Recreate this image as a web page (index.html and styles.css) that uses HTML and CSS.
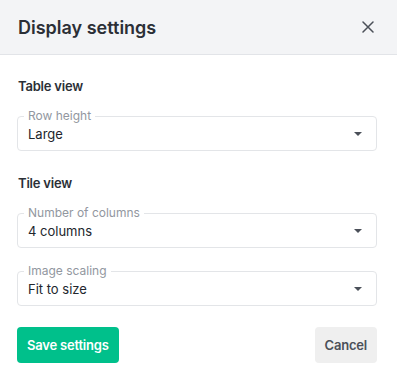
FILE: index.html
```html
<!DOCTYPE html>
<html lang="en">
<head>
    <meta charset="UTF-8">
    <meta name="viewport" content="width=device-width, initial-scale=1.0">
    <title>Display settings</title>
    <link rel="stylesheet" href="styles.css">
</head>
<body>

    <div class="dialog">
        <div class="dialog-header">
            <h2>Display settings</h2>
            <button class="close-btn" aria-label="Close">
                <svg width="12" height="12" viewBox="0 0 12 12">
                    <path d="M1 1 L11 11 M11 1 L1 11" stroke="#4b5059" stroke-width="1.5" stroke-linecap="round" fill="none"/>
                </svg>
            </button>
        </div>

        <div class="dialog-body">
            <h3>Table view</h3>

            <div class="field">
                <span class="field-label">Row height</span>
                <div class="field-value">Large</div>
                <span class="caret"></span>
            </div>

            <h3 class="section-gap">Tile view</h3>

            <div class="field">
                <span class="field-label">Number of columns</span>
                <div class="field-value">4 columns</div>
                <span class="caret"></span>
            </div>

            <div class="field field-gap">
                <span class="field-label">Image scaling</span>
                <div class="field-value">Fit to size</div>
                <span class="caret"></span>
            </div>

            <div class="actions">
                <button class="save-btn">Save settings</button>
                <button class="cancel-btn">Cancel</button>
            </div>
        </div>
    </div>

</body>
</html>
```

FILE: styles.css
```css
body {
    font-family: 'Inter', 'Noto Sans', sans-serif;
    background-color: #ffffff;
    margin: 0;
    padding: 0;
}

.dialog {
    width: 397px;
    height: 383px;
    background-color: #ffffff;
}

.dialog-header {
    display: flex;
    align-items: center;
    justify-content: space-between;
    height: 54px;
    padding: 0 23px 0 18px;
    background-color: #f3f4f6;
    border-bottom: 1px solid #e2e4e8;
}

h2 {
    margin: 0;
    font-size: 18px;
    font-weight: 600;
    color: #2b2f36;
}

.close-btn {
    display: flex;
    padding: 0;
    border: none;
    background: none;
    cursor: pointer;
}

.dialog-body {
    padding: 21px 20px 0 17px;
}

h3 {
    margin: 0 0 0 1px;
    font-size: 13px;
    line-height: 20px;
    font-weight: 600;
    letter-spacing: -0.2px;
    color: #2b2f36;
}

.section-gap {
    margin-top: 22px;
}

.field {
    position: relative;
    height: 35px;
    margin-top: 20px;
    border: 1px solid #e3e5e8;
    border-radius: 4px;
    box-sizing: border-box;
    display: flex;
    align-items: center;
}

.field-gap {
    margin-top: 23px;
}

.field-label {
    position: absolute;
    top: -8px;
    left: 6px;
    padding: 0 4px;
    background-color: #ffffff;
    font-size: 12px;
    line-height: 14px;
    color: #9297a0;
}

.field-value {
    padding: 0 10px;
    font-size: 13px;
    color: #22262c;
}

.caret {
    position: absolute;
    right: 14px;
    top: 15px;
    width: 0;
    height: 0;
    border-left: 4px solid transparent;
    border-right: 4px solid transparent;
    border-top: 4px solid #4b5059;
}

.actions {
    display: flex;
    justify-content: space-between;
    margin-top: 21px;
}

.save-btn,
.cancel-btn {
    height: 36px;
    padding: 0 10px;
    border: none;
    border-radius: 4px;
    font-family: 'Inter', 'Noto Sans', sans-serif;
    font-size: 13px;
    font-weight: 600;
    letter-spacing: -0.2px;
    white-space: nowrap;
    cursor: pointer;
}

.save-btn {
    background-color: #00c08b;
    color: #ffffff;
}

.cancel-btn {
    background-color: #efefef;
    color: #4b5059;
}
```
